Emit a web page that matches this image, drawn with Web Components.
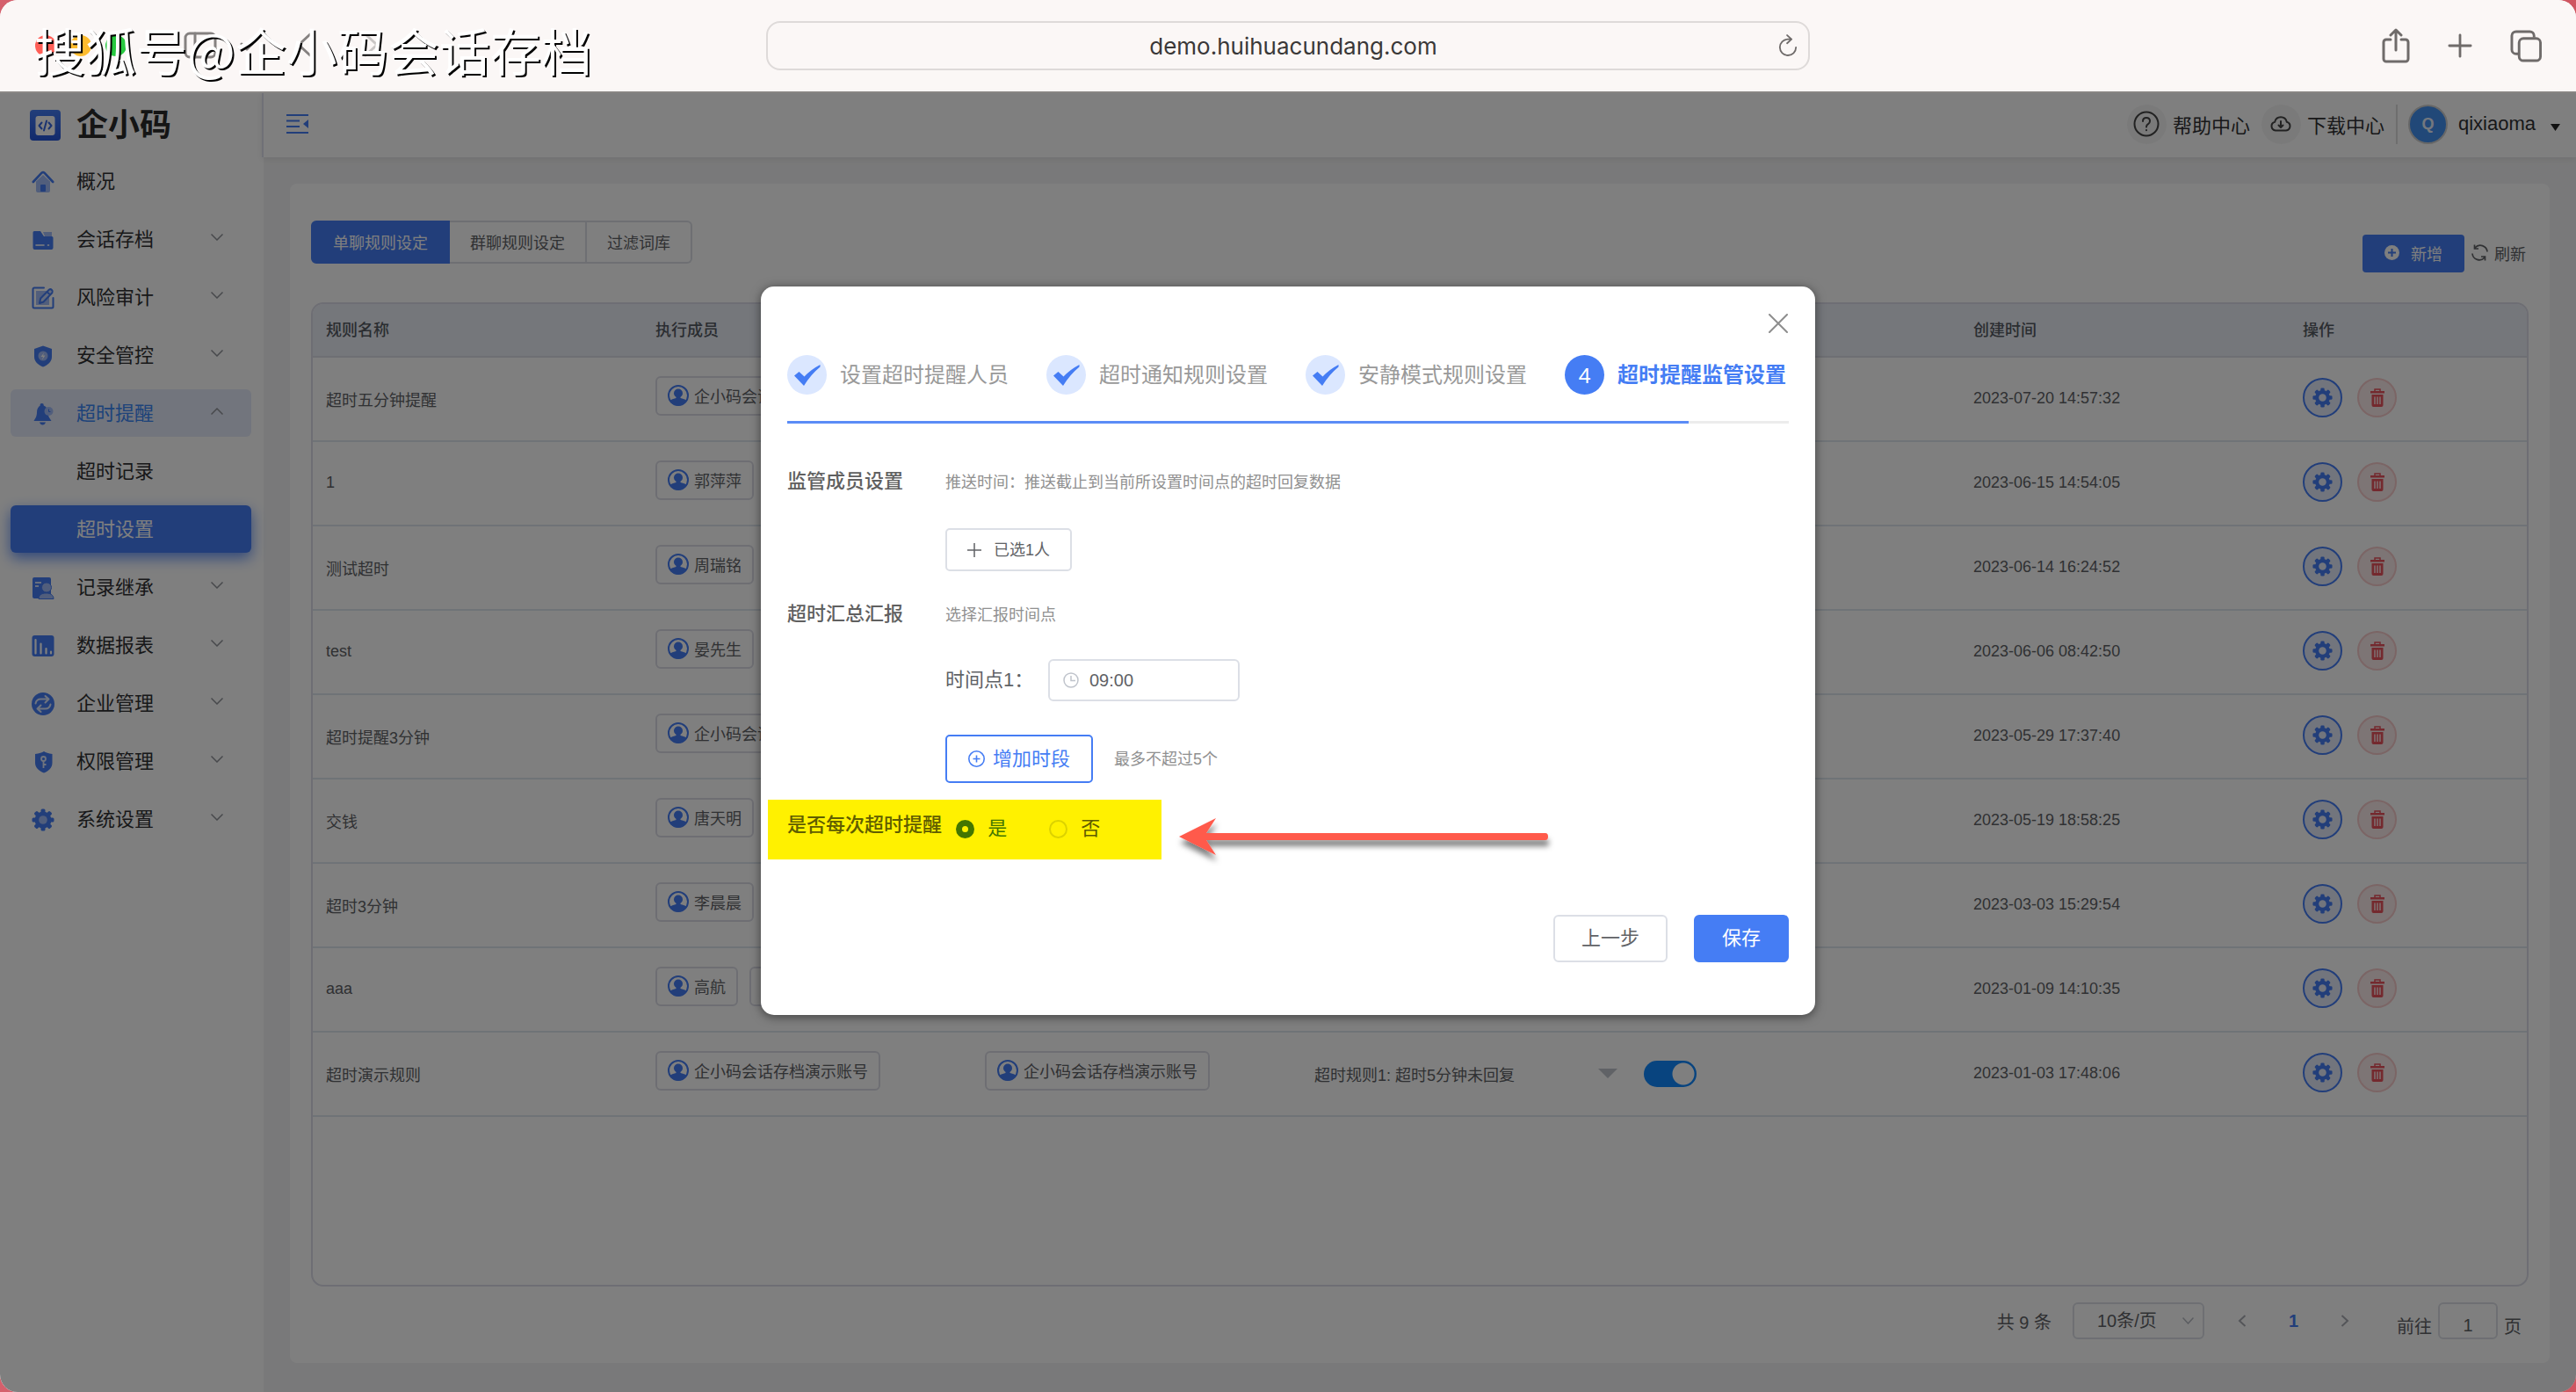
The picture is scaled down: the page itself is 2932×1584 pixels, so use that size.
<!DOCTYPE html>
<html lang="zh-CN">
<head>
<meta charset="utf-8">
<title>企小码 - 超时设置</title>
<style>
html, body { height: 100%; margin: 0; }
body {
  background: linear-gradient(100deg, #d5606c 0, #d5606c 45%, #e6d9d9 60%, #e6d9d9 68%, #cf5560 85%);
  font-family: "Liberation Sans", "Noto Sans CJK SC", sans-serif;
  font-size: 18px;
  color: #606266;
  --blue: #457df4;
  --line: #dcdfe6;
  --ink: #303133;
}
</style>
</head>
<body>
<app-window></app-window>

<script>
const RESET = `
  *, *::before, *::after { box-sizing: border-box; }
  :host { box-sizing: border-box; }
  button, input, select { font: inherit; color: inherit; margin: 0; padding: 0; background: none; border: 0; outline: 0; }
  button { cursor: pointer; }
  a { color: inherit; text-decoration: none; }
  svg { display: block; flex: none; }
`;

function define(name, render) {
  customElements.define(name, class extends HTMLElement {
    connectedCallback() {
      if (this.shadowRoot) return;
      const root = this.attachShadow({ mode: 'open' });
      const t = document.createElement('template');
      t.innerHTML = `<style>${RESET}</style>` + render(this);
      root.append(t.content.cloneNode(true));
    }
  });
}

function gear(hole) {
  let teeth = '';
  for (let i = 0; i < 8; i++) teeth += `<rect x="10.500" y="0.500" width="5" height="6" rx="1.500" transform="rotate(${i * 45} 13 13)"/>`;
  return `<g fill="#457df4">${teeth}<circle cx="13" cy="13" r="9.500"/></g><circle cx="13" cy="13" r="4.800" fill="${hole}"/>`;
}

const NAV_ICONS = {
  home: `<path fill="#a3bdf9" d="M5 12.500 13 5l8 7.500V23a2 2 0 0 1-2 2H7a2 2 0 0 1-2-2z"/><path fill="none" stroke="#457df4" stroke-width="2.600" stroke-linecap="round" stroke-linejoin="round" d="M1.800 13 11.500 2.700q1.500-1.400 3 0L24.200 13"/><rect x="10" y="16" width="6" height="8" rx="1" fill="#457df4"/>`,
  folder: `<path fill="#a3bdf9" d="M13 4h10v5H15z"/><path fill="#457df4" d="M3 3h7l4 6h9a1.500 1.500 0 0 1 1.500 1.500V22A2 2 0 0 1 22.500 24h-19A2 2 0 0 1 1.500 22V4.500A1.500 1.500 0 0 1 3 3z"/><path stroke="#fff" stroke-width="1.600" stroke-linecap="round" d="M5 19h9M18.500 19h1"/>`,
  edit: `<rect x="5" y="5" width="15" height="16" fill="#a3bdf9"/><path fill="none" stroke="#457df4" stroke-width="2" stroke-linejoin="round" stroke-linecap="round" d="M14 1.500H3A1.500 1.500 0 0 0 1.500 3v20A1.500 1.500 0 0 0 3 24.500h20a1.500 1.500 0 0 0 1.500-1.500V13"/><path fill="#c7d7fb" stroke="#457df4" stroke-width="2" stroke-linejoin="round" d="M9 19l1.200-5.500L20 3.500q1.500-1 3 .5t.5 3L13.500 17.500zM17.500 6l3.500 3.500"/>`,
  bolt: `<path fill="#457df4" d="M13 1.500 23 5v9c0 6-5 9.500-10 11.500C8 23.500 3 20 3 14V5z"/><circle cx="13" cy="13" r="5.500" fill="#a3bdf9"/><path fill="#fff" d="M14 9.500 10.500 14H13l-1 3.500 3.500-5H13z"/>`,
  bell: `<path fill="#457df4" d="M11.500 1a2.200 2.200 0 0 1 2.300 2.400C17 4.500 18.500 7.500 18.500 11c0 5 2.500 7.500 4 10H2.500c1.500-2.500 3.500-5 3.500-10 0-3.500 1.500-6.500 3.700-7.600A2 2 0 0 1 11.500 1zM9 22.500h7q-1 3-3.500 3T9 22.500z"/><circle cx="19.500" cy="10" r="5" fill="#a3bdf9"/><path fill="none" stroke="#457df4" d="M19.500 7.500V10.500H21.500"/>`,
  inherit: `<path fill="#457df4" d="M3 1h17a2 2 0 0 1 2 2v20H9v2H3a2 2 0 0 1-2-2V3a2 2 0 0 1 2-2z"/><path stroke="#fff" stroke-width="1.600" d="M4 7h7M4 11h4"/><path fill="#a3bdf9" stroke="#457df4" d="M8 25.500c0-4 3-6.500 8.500-6.500s8.500 2.500 8.500 6.500z"/><circle cx="17" cy="12.500" r="5.500" fill="#a3bdf9" stroke="#457df4"/>`,
  chart: `<rect x="0.500" y="1" width="25" height="24" rx="3" fill="#457df4"/><path stroke="#fff" stroke-width="2.200" stroke-linecap="round" d="M4.500 6v15.500M10.500 10.500v11M16.500 16v5.500M22 19.500v2"/>`,
  swap: `<circle cx="13" cy="13" r="13" fill="#457df4"/><path fill="none" stroke="#dfe8fd" stroke-width="2" stroke-linecap="round" stroke-linejoin="round" d="M4.500 12.500q1-5 6-5h8.500M15.500 4l4 3.500-4 4M21.500 13.500q-1 5-6 5H7M10.500 22l-4-3.500 4-4"/>`,
  key: `<path fill="#457df4" d="M14 1q3 2 9.500 3v10c0 6-4.500 9.500-9.500 11.500C9 23.500 4 20 4 14V4q7-1 10-3z"/><circle cx="13.500" cy="9.500" r="2.500" fill="none" stroke="#dfe8fd" stroke-width="1.800"/><path stroke="#dfe8fd" stroke-width="1.800" d="M13.500 12v8M13.500 16h3"/>`,
  gear: gear('#a3bdf9')
};

/* ---------- browser chrome ---------- */
define('browser-bar', () => `
<style>
  :host { display: grid; grid-template-columns: 1fr 40.5% 1fr; align-items: center; height: 106px; background: #fbf7f6; border-bottom: 2px solid #8a8886; color: #6f6b6a; }
  .left { display: flex; align-items: center; padding-left: 40px; }
  .dots { display: flex; gap: 16px; margin-right: 65px; }
  .dots i { width: 24px; height: 24px; border-radius: 50%; background: #ff5f57; }
  .dots i:nth-child(2) { background: #febc2e; }
  .dots i:nth-child(3) { background: #28c840; }
  .field { display: flex; align-items: center; height: 56px; border: 2px solid #dedad9; border-radius: 16px; padding: 0 12px; }
  input { flex: 1; min-width: 0; text-align: center; font: 26px Inter, "Liberation Sans", sans-serif; color: #3a3838; padding-left: 34px; }
  .right { display: flex; justify-content: flex-end; align-items: center; gap: 43px; padding-right: 38px; }
</style>
<div class="left">
  <div class="dots"><i></i><i></i><i></i></div>
  <svg width="220" height="32" viewBox="0 0 220 32" fill="none" stroke="#858180" stroke-width="3" stroke-linecap="round" stroke-linejoin="round">
    <rect x="2" y="2" width="34" height="27" rx="5"/><path d="M13 2v27M66 14l6 6 6-6M144 3l-13 12 13 12"/><path stroke="#c9c6c5" d="M207 3l13 12-13 12"/>
  </svg>
</div>
<div class="field">
  <input aria-label="地址" value="demo.huihuacundang.com">
  <button aria-label="重新载入"><svg width="22" height="26" viewBox="0 0 24 28" fill="none" stroke="#6f6b6a" stroke-width="2" stroke-linecap="round" stroke-linejoin="round"><path d="M22 16A10 10 0 1 1 12 6h4M11 1l5.500 5L11 11"/></svg></button>
</div>
<div class="right">
  <button aria-label="共享"><svg width="32" height="40" viewBox="0 0 32 40" fill="none" stroke="currentColor" stroke-width="3" stroke-linecap="round" stroke-linejoin="round"><path d="M10 13H5a3 3 0 0 0-3 3v19a3 3 0 0 0 3 3h22a3 3 0 0 0 3-3V16a3 3 0 0 0-3-3h-5M16 25V3M10 8l6-6 6 6"/></svg></button>
  <button aria-label="新标签页"><svg width="28" height="28" viewBox="0 0 30 30" stroke="currentColor" stroke-width="3" stroke-linecap="round"><path d="M15 2v26M2 15h26"/></svg></button>
  <button aria-label="标签页概览"><svg width="37" height="37" viewBox="0 0 38 38" fill="none" stroke="currentColor" stroke-width="3" stroke-linejoin="round"><path d="M10 28H7a5 5 0 0 1-5-5V7a5 5 0 0 1 5-5h16a5 5 0 0 1 5 5v2"/><rect x="10.500" y="10" width="25" height="26" rx="5"/></svg></button>
</div>`);

/* ---------- sidebar ---------- */
define('nav-item', (el) => {
  const icon = NAV_ICONS[el.getAttribute('icon')] || '';
  const fold = el.getAttribute('fold');
  return `
<style>
  :host { display: block; }
  a { display: flex; align-items: center; height: 54px; border-radius: 6px; padding: 0 32px 4px 24px; color: var(--ink); font-size: 22px; }
  .icon { margin: 6px 25px 0 0; }
  .fold { margin-left: auto; color: #909399; }
  :host([open]) a { background: #e4eafa; color: #3a86f5; }
  :host([current]) a { background: var(--blue); color: #fff; box-shadow: 0 6px 16px rgba(69, 125, 244, .85); }
</style>
<a href="#"><svg class="icon" width="26" height="26" viewBox="0 0 26 26" fill="none">${icon}</svg><slot></slot>
${fold ? `<svg class="fold" width="14" height="8" viewBox="0 0 14 8" fill="none" stroke="currentColor" stroke-width="1.500"><path d="${fold === 'up' ? 'M.5 7.500 7 1l6.500 6.500' : 'M.5.5 7 7 13.500.5'}"/></svg>` : ''}</a>`;
});

define('side-nav', () => `
<style>
  :host { display: block; width: 300px; background: #fff; padding: 0 14px 0 12px; }
  .brand { display: flex; align-items: center; gap: 18px; height: 73px; padding-left: 22px; font-size: 36px; font-weight: 700; color: #2b2b2b; line-height: 40px; }
  nav { display: flex; flex-direction: column; gap: 12px; }
</style>
<div class="brand">
  <svg width="35" height="35" viewBox="0 0 35 35"><defs><linearGradient id="g" x2="0" y2="1"><stop stop-color="#457df4"/><stop offset="1" stop-color="#2555d8"/></linearGradient></defs><rect width="35" height="35" rx="4" fill="url(#g)"/><rect x="6.500" y="7" width="22" height="22" rx="3" fill="#fff"/><path fill="none" stroke="#3566e2" stroke-width="2" stroke-linecap="round" stroke-linejoin="round" d="M13.500 14.500 10.500 18l3 3.500M21.500 14.500l3 3.500-3 3.500M19 12.500l-3 11"/></svg>
  <span>企小码</span>
</div>
<nav>
  <nav-item icon="home">概况</nav-item>
  <nav-item icon="folder" fold="down">会话存档</nav-item>
  <nav-item icon="edit" fold="down">风险审计</nav-item>
  <nav-item icon="bolt" fold="down">安全管控</nav-item>
  <nav-item icon="bell" fold="up" open>超时提醒</nav-item>
  <nav-item>超时记录</nav-item>
  <nav-item current>超时设置</nav-item>
  <nav-item icon="inherit" fold="down">记录继承</nav-item>
  <nav-item icon="chart" fold="down">数据报表</nav-item>
  <nav-item icon="swap" fold="down">企业管理</nav-item>
  <nav-item icon="key" fold="down">权限管理</nav-item>
  <nav-item icon="gear" fold="down">系统设置</nav-item>
</nav>`);

/* ---------- top bar ---------- */
define('top-bar', () => `
<style>
  :host { display: flex; align-items: center; height: 73px; padding: 0 18px 3px 26px; background: #fff; border-left: 2px solid #dfe0ee; box-shadow: 0 2px 8px rgba(0, 0, 0, .08); color: var(--ink); font-size: 22px; z-index: 1; margin-left: -2px; }
  .tools { margin-left: auto; display: flex; align-items: center; }
  a { display: flex; align-items: center; gap: 7px; margin-right: 13px; }
  a span { display: grid; place-items: center; width: 45px; height: 45px; border-radius: 50%; background: #f5f5f5; }
  .user { display: flex; align-items: center; border-left: 2px solid #dcdcdc; height: 45px; padding-left: 12px; }
  .user b { display: grid; place-items: center; width: 45px; height: 45px; border-radius: 50%; background: #4290f0; border: 2px solid #cfcfcf; color: #e9f1fd; font-size: 18px; margin-right: 12px; }
  .user svg { margin: 8px 0 0 17px; }
</style>
<button aria-label="折叠菜单"><svg width="25" height="22" viewBox="0 0 25 22" stroke="#457df4" stroke-width="2" fill="none"><path d="M0 1h25M0 7.500h15M0 14h15M0 21h25"/><path fill="#457df4" stroke="none" d="M25 6v10l-6-5z"/></svg></button>
<div class="tools">
  <a href="#"><span><svg width="30" height="30" viewBox="0 0 30 30" fill="none" stroke="#444" stroke-width="2" stroke-linecap="round"><circle cx="15" cy="15" r="13.500"/><path d="M11 12q0-4 4-4t4 3.800q0 2-2 3.400-2 1.300-2 3.300M15 22v.3"/></svg></span>帮助中心</a>
  <a href="#"><span><svg width="24" height="20" viewBox="0 0 24 20" fill="none" stroke="#444" stroke-width="2" stroke-linecap="round" stroke-linejoin="round"><path d="M6 17.500a5 5 0 0 1-.8-9.800 7 7 0 0 1 13.600 0 5 5 0 0 1-.8 9.800zM12 7v6.500M9.500 11.500l2.500 2.500 2.500-2.500"/></svg></span>下载中心</a>
  <div class="user"><b>Q</b>qixiaoma<svg width="11" height="8" viewBox="0 0 11 8"><path fill="#222" d="M0 0h11L5.500 8z"/></svg></div>
</div>`);

/* ---------- rule table ---------- */
define('member-tag', () => `
<style>
  :host { display: inline-flex; align-items: center; gap: 6px; height: 45px; min-width: 94px; padding: 0 12px 1px; border: 2px solid #dcdde6; border-radius: 6px; margin-right: 13px; white-space: nowrap; }
</style>
<svg width="24" height="24" viewBox="0 0 24 24"><defs><clipPath id="c"><circle cx="12" cy="12" r="11.500"/></clipPath></defs><circle cx="12" cy="12" r="11" fill="none" stroke="#457df4" stroke-width="2"/><g clip-path="url(#c)" fill="#457df4"><circle cx="12" cy="9.500" r="5"/><path d="M9.500 12h5v3q6 1 8 4V24H1v-5q3-3 8.500-4z"/></g></svg><slot></slot>`);

const ACCOUNT = '企小码会话存档演示账号';
const RULES = [
  ['超时五分钟提醒', [ACCOUNT], '2023-07-20 14:57:32'],
  ['1', ['郭萍萍'], '2023-06-15 14:54:05'],
  ['测试超时', ['周瑞铭'], '2023-06-14 16:24:52'],
  ['test', ['晏先生'], '2023-06-06 08:42:50'],
  ['超时提醒3分钟', [ACCOUNT], '2023-05-29 17:37:40'],
  ['交钱', ['唐天明'], '2023-05-19 18:58:25'],
  ['超时3分钟', ['李晨晨'], '2023-03-03 15:29:54'],
  ['aaa', ['高航', ''], '2023-01-09 14:10:35'],
  ['超时演示规则', [ACCOUNT], '2023-01-03 17:48:06', true]
];

define('rule-table', () => `
<style>
  :host { display: block; border: 2px solid #dcdde8; border-radius: 14px; overflow: hidden; }
  table { width: 100%; table-layout: fixed; border-collapse: separate; border-spacing: 0; }
  col.c { width: 375px; }
  th, td { text-align: left; padding: 0 15px; border-bottom: 2px solid #dfe6ee; white-space: nowrap; }
  th { height: 61px; padding-bottom: 3px; background: #ebeef7; font-weight: 500; color: #555a62; border-color: #dcdfe8; }
  td { height: 96px; padding-bottom: 1px; }
  .tags { display: flex; padding-bottom: 6px; }
  .rule { display: flex; align-items: center; justify-content: space-between; }
  .acts { display: flex; gap: 17px; padding-bottom: 2px; }
  .acts button { display: grid; place-items: center; width: 45px; height: 45px; border-radius: 50%; border: 2px solid var(--blue); background: #e4ebfb; }
  .acts button + button { border-color: #f6caca; background: #faeaea; }
  .switch { appearance: none; display: block; width: 60px; height: 30px; border-radius: 15px; background: radial-gradient(circle at 45px 15px, #fff 12px, transparent 13px) #1088ff; }
</style>
<table>
  <colgroup><col class="c"><col class="c"><col class="c"><col class="c"><col class="c"><col class="c"><col></colgroup>
  <thead><tr><th>规则名称</th><th>执行成员</th><th></th><th></th><th></th><th>创建时间</th><th>操作</th></tr></thead>
  <tbody>${RULES.map(([name, members, time, full]) => `<tr>
    <td>${name}</td>
    <td><div class="tags">${members.map(m => `<member-tag>${m}</member-tag>`).join('')}</div></td>
    <td>${full ? `<div class="tags"><member-tag>${ACCOUNT}</member-tag></div>` : ''}</td>
    <td>${full ? `<div class="rule">超时规则1: 超时5分钟未回复<svg width="22" height="11" viewBox="0 0 22 11"><path fill="#c0c4cc" d="M0 0h22L11 11z"/></svg></div>` : ''}</td>
    <td>${full ? `<input class="switch" type="checkbox" checked aria-label="启用${name}">` : ''}</td>
    <td>${time}</td>
    <td><div class="acts">
      <button aria-label="设置"><svg width="23" height="23" viewBox="0 0 26 26">${gear('#e4ebfb')}</svg></button>
      <button aria-label="删除"><svg width="16" height="21" viewBox="0 0 16 21" fill="none"><path fill="#e8525c" d="M0 3h16v2.500H0zM1.500 7h13v12a2 2 0 0 1-2 2h-9a2 2 0 0 1-2-2z"/><path stroke="#e8525c" stroke-width="1.500" d="M5 3V1h6v2"/><path stroke="#fbe6e6" stroke-width="1.500" d="M5 9.500v8.500M8 9.500v8.500M11 9.500v8.500"/></svg></button>
    </div></td></tr>`).join('')}</tbody>
</table>`);

define('page-nav', () => `
<style>
  :host { display: flex; align-items: center; justify-content: flex-end; height: 42px; font-size: 20px; padding-right: 8px; }
  .size { position: relative; display: flex; align-items: center; margin: 0 38px 0 24px; }
  select { appearance: none; width: 150px; height: 42px; border: 2px solid var(--line); border-radius: 6px; padding-left: 26px; }
  .size svg { position: absolute; right: 12px; pointer-events: none; }
  .cur { color: var(--blue); font-weight: 700; width: 13px; margin: 0 47px; }
  label { display: flex; align-items: center; gap: 7px; margin-left: 54px; }
  label span { padding-top: 11px; }
  label input { width: 68px; height: 42px; border: 2px solid var(--line); border-radius: 6px; text-align: center; padding-top: 11px; }
</style>
<span>共 9 条</span>
<div class="size"><select aria-label="每页条数"><option>10条/页</option></select><svg width="13" height="8" viewBox="0 0 13 8" fill="none" stroke="#b5b9c1" stroke-width="1.500"><path d="M.5.5l6 6.500 6-6.500"/></svg></div>
<button aria-label="上一页"><svg width="10" height="14" viewBox="0 0 10 14" fill="none" stroke="#a8abb2" stroke-width="2"><path d="M8.500 1 2 7l6.500 6"/></svg></button>
<button class="cur">1</button>
<button aria-label="下一页"><svg width="10" height="14" viewBox="0 0 10 14" fill="none" stroke="#a8abb2" stroke-width="2"><path d="M1.500 1 8 7l-6.500 6"/></svg></button>
<label><span>前往</span><input value="1"><span>页</span></label>`);

define('rule-page', () => `
<style>
  :host { display: flex; flex-direction: column; flex: 1; min-height: 0; margin: 30px 30px 33px; padding: 42px 24px 27px; background: #fff; border-radius: 8px; }
  .bar { display: flex; justify-content: space-between; align-items: flex-start; height: 59px; margin-bottom: 34px; }
  .tabs { display: flex; }
  .tabs button { height: 49px; padding: 0 23px 1px; border: 2px solid var(--line); border-left: 0; }
  .tabs button:first-child { background: var(--blue); border-color: var(--blue); border-left: 2px solid var(--blue); color: #fff; border-radius: 6px 0 0 6px; }
  .tabs button:last-child { border-radius: 0 6px 6px 0; }
  .acts { display: flex; align-items: center; gap: 8px; align-self: flex-end; }
  .add { display: flex; align-items: center; gap: 13px; height: 43px; padding: 0 25px 2px; border-radius: 4px; background: var(--blue); color: #fff; }
  .reload { display: flex; align-items: center; gap: 7px; padding: 0 3px 2px 0; }
  rule-table { flex: 1; margin-bottom: 18px; }
</style>
<div class="bar">
  <div class="tabs"><button>单聊规则设定</button><button>群聊规则设定</button><button>过滤词库</button></div>
  <div class="acts">
    <button class="add"><svg width="17" height="17" viewBox="0 0 17 17"><circle cx="8.500" cy="8.500" r="8.500" fill="#fff"/><path stroke="#457df4" stroke-width="2" d="M8.500 4v9M4 8.500h9"/></svg>新增</button>
    <button class="reload"><svg width="19" height="19" viewBox="0 0 19 19" fill="none" stroke="#606266" stroke-width="1.700"><path d="M1 10.500A8 8 0 0 0 15 15M18 8.500A8 8 0 0 0 4 4M3.500.5V5H8M15.500 18.500V14H11"/></svg>刷新</button>
  </div>
</div>
<rule-table></rule-table>
<page-nav></page-nav>`);

/* ---------- dialog ---------- */
define('step-item', (el) => `
<style>
  :host { display: flex; align-items: center; gap: 15px; font-size: 24px; color: #999; white-space: nowrap; }
  i { display: grid; place-items: center; width: 45px; height: 45px; border-radius: 50%; background: #dbe7ff; font-style: normal; }
  :host([current]) { color: var(--blue); font-weight: 700; }
  :host([current]) i { background: var(--blue); color: #fff; font: 24px "Noto Sans", sans-serif; }
</style>
<i>${el.hasAttribute('current') ? el.getAttribute('number') : '<svg width="30" height="26" viewBox="0 0 30 24"><path fill="#457df4" d="M0 12.500 5.500 8l6 5.500Q19 5.500 29.500 0v2.500Q19 11 11 24z"/></svg>'}</i><slot></slot>`);

define('supervise-dialog', () => `
<style>
  :host { display: block; position: relative; width: 1200px; background: #fff; border-radius: 15px; box-shadow: 0 2px 12px rgba(0, 0, 0, .5); padding: 78px 30px 60px; font-size: 22px; line-height: 32px; }
  .close { position: absolute; right: 31px; top: 31px; }
  .steps { display: flex; gap: 43px; height: 45px; }
  .track { height: 3px; background: #ececec; margin: 30px 0 50px; }
  .track div { width: 90%; height: 3px; background: #5b8cf6; }
  .row { display: grid; grid-template-columns: 180px 1fr; }
  .row > div { display: flex; flex-direction: column; align-items: flex-start; }
  .label { font-weight: 500; color: #606060; white-space: nowrap; }
  small { font-size: 18px; color: #909090; }
  .row > div > small { padding-top: 1px; margin-bottom: -1px; }
  .pick { display: flex; align-items: center; gap: 14px; height: 49px; padding: 0 23px; border: 2px solid var(--line); border-radius: 5px; font-size: 18px; margin: 37px 0 33px; }
  .time { display: flex; align-items: center; margin: 35px 0 38px; }
  .time label { width: 117px; }
  .box { display: flex; align-items: center; gap: 12px; width: 218px; height: 48px; border: 2px solid var(--line); border-radius: 6px; padding: 0 15px; }
  .box input { width: 100%; min-width: 0; font-size: 20px; }
  .more { display: flex; align-items: center; gap: 24px; margin-bottom: 19px; }
  .more button { display: flex; align-items: center; gap: 9px; height: 55px; padding: 0 24px; border: 2px solid var(--blue); border-radius: 5px; color: var(--blue); }
  .note { display: flex; align-items: flex-start; gap: 20px; height: 68px; margin-left: -22px; }
  .mark { display: flex; align-items: flex-start; width: 448px; height: 68px; padding: 13px 22px; background: #fff100; color: #605d00; }
  .mark .label { width: 198px; color: #605d00; }
  .mark label { display: flex; align-items: center; gap: 15px; height: 40px; width: 109px; }
  input[type=radio] { appearance: none; width: 21px; height: 21px; border-radius: 50%; border: 2px solid #dcd200; }
  input[type=radio]:checked { border: 7px solid #437600; }
  .on { color: #437600; }
  .arrow { margin-top: 20px; }
  footer { display: flex; justify-content: flex-end; gap: 30px; margin-top: 63px; }
  footer button { height: 54px; padding: 0 30px; border: 2px solid var(--line); border-radius: 6px; }
  footer .save { background: var(--blue); border-color: var(--blue); color: #fff; }
</style>
<button class="close" aria-label="关闭"><svg width="22" height="22" viewBox="0 0 22 22" stroke="#8e8e8e" stroke-width="2" stroke-linecap="round"><path d="M1 1l20 20M21 1 1 21"/></svg></button>
<div class="steps">
  <step-item>设置超时提醒人员</step-item>
  <step-item>超时通知规则设置</step-item>
  <step-item>安静模式规则设置</step-item>
  <step-item current number="4">超时提醒监管设置</step-item>
</div>
<div class="track"><div></div></div>
<div class="row">
  <span class="label">监管成员设置</span>
  <div>
    <small>推送时间：推送截止到当前所设置时间点的超时回复数据</small>
    <button class="pick"><svg width="16" height="16" viewBox="0 0 16 16" stroke="#606266" stroke-width="1.500"><path d="M8 0v16M0 8h16"/></svg>已选1人</button>
  </div>
</div>
<div class="row">
  <span class="label">超时汇总汇报</span>
  <div>
    <small>选择汇报时间点</small>
    <div class="time"><label for="t1">时间点1：</label>
      <div class="box"><svg width="18" height="18" viewBox="0 0 18 18" fill="none" stroke="#c0c4cc" stroke-width="1.500"><circle cx="9" cy="9" r="8"/><path d="M9 4v5.500h5"/></svg><input id="t1" value="09:00"></div>
    </div>
    <div class="more"><button><svg width="19" height="19" viewBox="0 0 19 19" fill="none" stroke="#457df4" stroke-width="1.600"><circle cx="9.500" cy="9.500" r="8.700"/><path d="M9.500 5.500v8M5.500 9.500h8"/></svg>增加时段</button><small>最多不超过5个</small></div>
  </div>
</div>
<div class="note">
  <div class="mark">
    <span class="label">是否每次超时提醒</span>
    <label class="on"><input type="radio" name="each" checked>是</label>
    <label><input type="radio" name="each">否</label>
  </div>
  <svg class="arrow" width="430" height="56" viewBox="0 0 430 56" overflow="visible"><defs><filter id="s" x="-10%" y="-50%" width="120%" height="220%"><feDropShadow dx="1" dy="7" stdDeviation="3" flood-color="#000" flood-opacity=".5"/></filter></defs><path filter="url(#s)" fill="#ff5a4c" d="M0 22 42 1 31 18H417q3 0 3 4t-3 4H31l11 17z"/></svg>
</div>
<footer><button>上一步</button><button class="save">保存</button></footer>`);

/* ---------- window ---------- */
define('app-window', () => `
<style>
  :host { display: flex; flex-direction: column; position: relative; height: 100vh; border-radius: 20px; overflow: hidden; background: #f3f3f4; }
  .app { flex: 1; min-height: 0; display: flex; position: relative; }
  .main { flex: 1; min-width: 0; display: flex; flex-direction: column; }
  .mask { position: absolute; inset: 0; z-index: 2; background: rgba(0, 0, 0, .5); display: flex; justify-content: center; align-items: flex-start; padding-top: 220px; }
  .stamp { position: absolute; left: 39px; top: 16px; z-index: 3; font: 58px/80px "Noto Sans CJK SC", sans-serif; color: #fff; text-shadow: 2px 2px 0 #000; white-space: nowrap; }
</style>
<browser-bar></browser-bar>
<div class="app">
  <side-nav></side-nav>
  <div class="main"><top-bar></top-bar><rule-page></rule-page></div>
  <div class="mask"><supervise-dialog role="dialog" aria-label="超时提醒监管设置"></supervise-dialog></div>
</div>
<div class="stamp">搜狐号@企小码会话存档</div>`);
</script>
</body>
</html>
